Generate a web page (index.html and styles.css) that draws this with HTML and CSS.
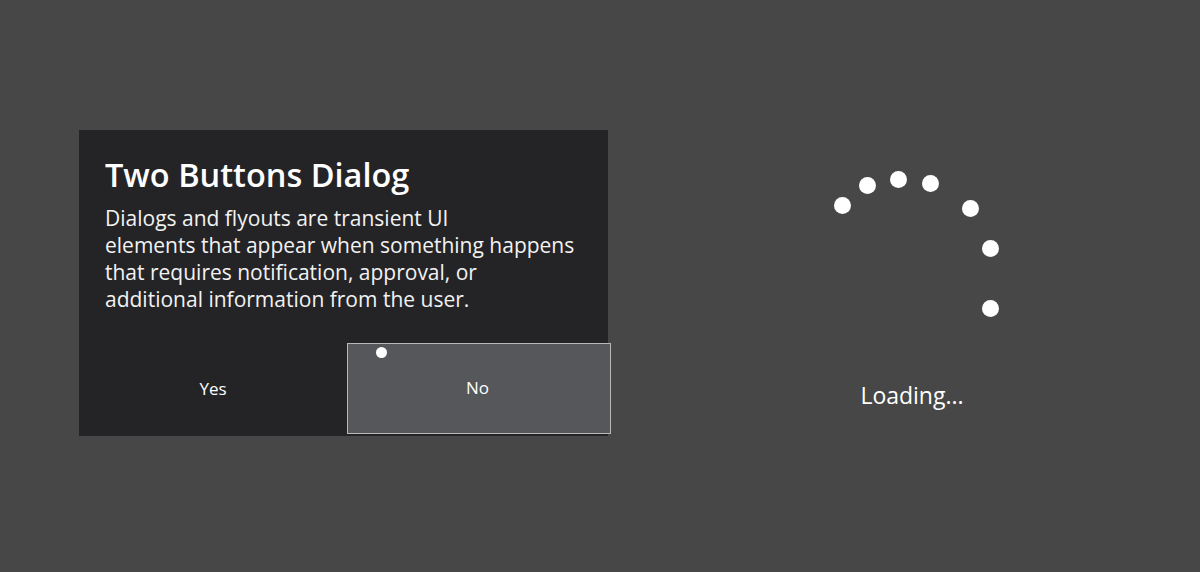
FILE: index.html
```html
<!DOCTYPE html>
<html>
<head>
<meta charset="utf-8">
<link rel="stylesheet" href="styles.css">
</head>
<body>
<div class="page">
  <div class="dialog">
    <div class="content">
      <h1 class="title">Two Buttons Dialog</h1>
      <p class="body">Dialogs and flyouts are transient UI<br>elements that appear when something happens<br>that requires notification, approval, or<br>additional information from the user.</p>
    </div>
    <div class="buttons">
      <div class="btn">Yes</div>
      <div class="btn focused">No<span class="cursor"></span></div>
    </div>
  </div>
  <div class="loader">
    <div class="ring">
      <span class="dot" style="left:0;top:26px"></span>
      <span class="dot" style="left:25px;top:6px"></span>
      <span class="dot" style="left:56px;top:0"></span>
      <span class="dot" style="left:88px;top:4px"></span>
      <span class="dot" style="left:128px;top:29px"></span>
      <span class="dot" style="left:148px;top:69px"></span>
      <span class="dot" style="left:148px;top:129px"></span>
    </div>
    <div class="label">Loading...</div>
  </div>
</div>
</body>
</html>
```
FILE: styles.css
```css
html, body {
  margin: 0;
  padding: 0;
}
body {
  background: #474747;
  width: 1200px;
  height: 572px;
  overflow: hidden;
  font-family: "Open Sans", "Noto Sans", sans-serif;
  color: #fff;
}
.page {
  display: flex;
  align-items: flex-start;
}
.dialog {
  margin-left: 79px;
  margin-top: 130px;
  width: 529px;
  height: 306px;
  background: #242427;
  display: flex;
  flex-direction: column;
}
.content {
  padding: 0 26px;
  height: 213px;
}
.title {
  margin: 0;
  padding-top: 25px;
  font-size: 32.5px;
  line-height: 40px;
  font-weight: 600;
}
.body {
  margin: 10px 0 0;
  font-size: 21px;
  line-height: 27px;
  font-weight: 400;
  color: #f2f2f2;
}
.buttons {
  display: grid;
  grid-template-columns: 268px 264px;
  height: 91px;
}
.btn {
  display: flex;
  align-items: center;
  justify-content: center;
  font-size: 17px;
  position: relative;
}
.btn.focused {
  background: #56575a;
  border: 1.5px solid #b8b8b8;
  box-sizing: border-box;
  padding-right: 3px;
  padding-bottom: 2px;
}
.cursor {
  position: absolute;
  left: 28px;
  top: 3px;
  width: 11px;
  height: 11px;
  border-radius: 50%;
  background: #fff;
}
.loader {
  margin-left: 224px;
  margin-top: 171px;
  display: flex;
  flex-direction: column;
  align-items: center;
  width: 160px;
}
.ring {
  position: relative;
  width: 164px;
  height: 146px;
  margin-left: 8px;
}
.dot {
  position: absolute;
  width: 17px;
  height: 17px;
  border-radius: 50%;
  background: #fff;
}
.label {
  margin-top: 63px;
  font-size: 23px;
  line-height: 30px;
}
```
